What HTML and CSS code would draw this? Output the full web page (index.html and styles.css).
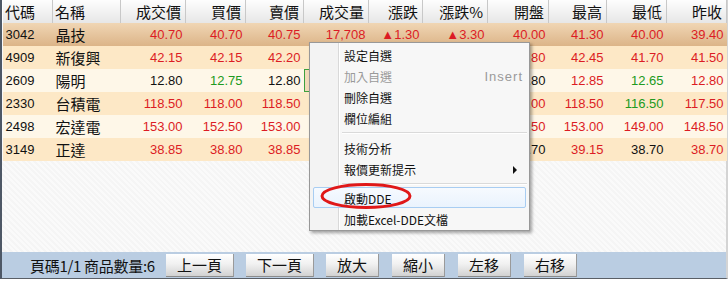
FILE: index.html
```html
<!DOCTYPE html>
<html>
<head>
    <title>自選報價</title>
    <link rel="stylesheet" href="styles.css">
</head>
<body>
<div class="frame">
    <table class="quotes">
        <colgroup>
            <col style="width:50px"><col style="width:68px"><col style="width:65px"><col style="width:60px">
            <col style="width:58px"><col style="width:65px"><col style="width:54px"><col style="width:65px">
            <col style="width:61px"><col style="width:58px"><col style="width:60px"><col style="width:60px">
        </colgroup>
        <thead>
            <tr>
                <th class="left">代碼</th><th class="left">名稱</th><th>成交價</th><th>買價</th><th>賣價</th><th>成交量</th>
                <th>漲跌</th><th>漲跌%</th><th>開盤</th><th>最高</th><th>最低</th><th>昨收</th>
            </tr>
        </thead>
        <tbody>
            <tr class="sel">
                <td class="code">3042</td><td class="name">晶技</td>
                <td class="up">40.70</td><td class="up">40.70</td><td class="up">40.75</td><td class="up">17,708</td>
                <td class="up">▲1.30</td><td class="up">▲3.30</td><td class="up">40.00</td><td class="up">41.30</td><td class="up">40.00</td><td class="up">39.40</td>
            </tr>
            <tr class="even">
                <td class="code">4909</td><td class="name">新復興</td>
                <td class="up">42.15</td><td class="up">42.15</td><td class="up">42.20</td><td class="up">3,215</td>
                <td class="up">▲0.65</td><td class="up">▲1.57</td><td class="up">41.80</td><td class="up">42.45</td><td class="up">41.70</td><td class="up">41.50</td>
            </tr>
            <tr class="odd">
                <td class="code">2609</td><td class="name">陽明</td>
                <td>12.80</td><td class="down">12.75</td><td>12.80</td><td class="cursor">8,902</td>
                <td>0.00</td><td>0.00</td><td>12.80</td><td class="up">12.85</td><td class="down">12.65</td><td class="up">12.80</td>
            </tr>
            <tr class="even">
                <td class="code">2330</td><td class="name">台積電</td>
                <td class="up">118.50</td><td class="up">118.00</td><td class="up">118.50</td><td class="up">25,611</td>
                <td class="up">▲1.00</td><td class="up">▲0.85</td><td class="up">117.00</td><td class="up">118.50</td><td class="down">116.50</td><td class="up">117.50</td>
            </tr>
            <tr class="odd">
                <td class="code">2498</td><td class="name">宏達電</td>
                <td class="up">153.00</td><td class="up">152.50</td><td class="up">153.00</td><td class="up">6,420</td>
                <td class="up">▲4.50</td><td class="up">▲3.03</td><td class="up">149.50</td><td class="up">153.00</td><td class="up">149.00</td><td class="up">148.50</td>
            </tr>
            <tr class="even">
                <td class="code">3149</td><td class="name">正達</td>
                <td class="up">38.85</td><td class="up">38.80</td><td class="up">38.85</td><td class="up">1,204</td>
                <td class="up">▲0.15</td><td class="up">▲0.39</td><td>38.70</td><td class="up">39.15</td><td>38.70</td><td class="up">38.70</td>
            </tr>
        </tbody>
    </table>

    <div class="blank"></div>

    <div class="pager">
        <span class="count">頁碼1/1 商品數量:6</span>
        <button type="button" class="btn wide">上一頁</button>
        <button type="button" class="btn wide">下一頁</button>
        <button type="button" class="btn">放大</button>
        <button type="button" class="btn">縮小</button>
        <button type="button" class="btn">左移</button>
        <button type="button" class="btn">右移</button>
    </div>

    <div class="menu">
        <div class="item">設定自選</div>
        <div class="item disabled">加入自選<span class="key">Insert</span></div>
        <div class="item">刪除自選</div>
        <div class="item">欄位編組</div>
        <div class="sep"></div>
        <div class="item">技術分析</div>
        <div class="item">報價更新提示<span class="arrow"></span></div>
        <div class="sep short"></div>
        <div class="item hover">啟動DDE</div>
        <div class="item">加載Excel-DDE文檔</div>
    </div>

    <svg class="mark" width="94" height="30" viewBox="0 0 94 30">
        <ellipse cx="47" cy="14" rx="44" ry="11.5" fill="none" stroke="#e01818" stroke-width="3"/>
    </svg>
</div>
</body>
</html>
```

FILE: styles.css
```css
body {
    margin: 0;
    background: #fff;
}
.frame {
    position: relative;
    width: 724px;
    height: 278px;
    border-left: 2px solid #4e5866;
    border-right: 2px solid #d4d4d4;
    border-bottom: 1px solid #5a5f66;
    display: flex;
    flex-direction: column;
    background: #f8f8f8;
    font-family: "Liberation Sans", Arial, sans-serif;
}
.quotes {
    border-collapse: collapse;
    table-layout: fixed;
    width: 724px;
}
.quotes th {
    height: 23px;
    padding: 0 4px 0 0;
    text-align: right;
    font-family: "Noto Sans CJK TC", sans-serif;
    font-size: 15px;
    font-weight: normal;
    color: #111;
    line-height: 23px;
    background: linear-gradient(#fdfdfd, #e6e6e6);
    border-right: 1px solid #c8c8c8;
    border-left: 1px solid #fff;
    white-space: nowrap;
}
.quotes th.left {
    text-align: left;
    padding-left: 2px;
}
.quotes td {
    height: 23px;
    padding: 0 3px 0 0;
    text-align: right;
    font-size: 13px;
    color: #111;
    white-space: nowrap;
    overflow: hidden;
}
.quotes td.code {
    text-align: left;
    padding-left: 3px;
}
.quotes td.name {
    text-align: left;
    padding-left: 3px;
    font-family: "Noto Sans CJK TC", sans-serif;
    font-size: 15px;
    line-height: 20px;
}
.quotes td.up {
    color: #dc1c24;
}
.quotes td.down {
    color: #209a20;
}
.quotes td.cursor {
    box-shadow: inset 0 0 0 1px #3da03d;
    background: #f2d9b8;
}
.sel td {
    background: linear-gradient(#f0d6b4, #dcb488);
}
.even td {
    background: #fde8c6;
}
.odd td {
    background: #fef7e8;
}
.blank {
    flex: 1;
    background: repeating-linear-gradient(45deg, #fafafa 0 2px, #f5f5f5 2px 4px);
}
.pager {
    height: 26px;
    display: flex;
    align-items: center;
    background: #bacde2;
    padding-left: 28px;
}
.count {
    width: 136px;
    font-family: "Noto Sans CJK TC", sans-serif;
    font-size: 15px;
    color: #111;
    letter-spacing: -0.3px;
    white-space: nowrap;
}
.btn {
    width: 53px;
    height: 23px;
    margin-right: 13px;
    padding: 0;
    border: none;
    border-right: 1px solid #9a9a9a;
    border-bottom: 1px solid #8c8c8c;
    background: linear-gradient(#ffffff, #f1f1f1 45%, #d2d2d2);
    font-family: "Noto Sans CJK TC", sans-serif;
    font-size: 15px;
    color: #111;
    line-height: 21px;
}
.btn.wide {
    width: 68px;
    margin-right: 12px;
}
.menu {
    position: absolute;
    left: 307px;
    top: 42px;
    width: 215px;
    padding: 1px 2px 0 2px;
    height: 186px;
    background: linear-gradient(90deg, #f3f3f3 0 28px, #d9d9d9 28px 29px, #fff 29px 30px, #f7f7f7 30px);
    border: 1px solid #989898;
    box-shadow: 2px 2px 3px rgba(0, 0, 0, 0.35);
    font-family: "Noto Sans CJK TC", sans-serif;
    font-size: 12px;
    color: #111;
}
.item {
    position: relative;
    height: 21px;
    line-height: 21px;
    padding-left: 30px;
    border: 1px solid transparent;
    margin: 0 1px;
    box-sizing: border-box;
}
.item.disabled {
    color: #9a9a9a;
}
.item.hover {
    border-color: #a8cdf2;
    border-radius: 2px;
    background: linear-gradient(#f6faff, #eaf3fd);
}
.key {
    position: absolute;
    right: 2px;
    font-family: "Liberation Sans", Arial, sans-serif;
    font-size: 13px;
    letter-spacing: 1px;
}
.arrow {
    position: absolute;
    right: 8px;
    top: 7px;
    width: 0;
    height: 0;
    border-top: 4px solid transparent;
    border-bottom: 4px solid transparent;
    border-left: 4px solid #111;
}
.sep {
    height: 9px;
    margin-left: 30px;
    background: linear-gradient(#0000 4px, #dadada 4px 5px, #fff 5px 6px, #0000 6px);
}
.sep.short {
    height: 8px;
}
.mark {
    position: absolute;
    left: 317px;
    top: 182px;
}
```
